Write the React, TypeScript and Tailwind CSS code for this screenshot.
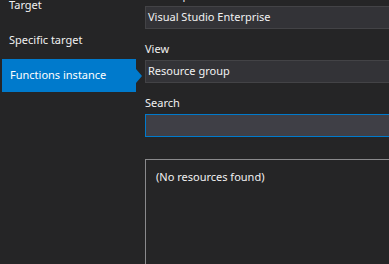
import React from "react";

const font = { fontFamily: '"Noto Sans", "Segoe UI", sans-serif' };

export default function App() {
  return (
    <div
      className="w-[389px] h-[264px] overflow-hidden bg-[#252526] text-[#f1f1f1] text-[11px] flex items-start"
      style={font}
    >
      {/* Sidebar */}
      <div className="w-[134px] shrink-0 ml-[2px] flex flex-col gap-[2px] mt-[-11px]">
        <div className="h-[33px] shrink-0 flex items-center pl-[7px]">Target</div>
        <div className="h-[33px] shrink-0 flex items-center pl-[7px]">Specific target</div>
        <div className="relative h-[33px] shrink-0 flex items-center pl-[8px] bg-[#007acc] text-white">
          Functions instance
          <div className="absolute right-[-6px] top-[10px] w-0 h-0 border-y-[7px] border-y-transparent border-l-[6px] border-l-[#007acc]" />
        </div>
      </div>

      {/* Main */}
      <div className="ml-[9px] w-[320px] min-w-[320px] shrink-0 flex flex-col">
        <div className="h-[16px] shrink-0 leading-[16px] mt-[-13px] mb-[3px]">Subscription</div>
        <div className="h-[23px] shrink-0 border border-[#434346] bg-[#333337] flex items-center pl-[2px]">
          Visual Studio Enterprise
        </div>
        <div className="h-[16px] shrink-0 leading-[16px] mt-[12px] mb-[3px]">View</div>
        <div className="h-[23px] shrink-0 border border-[#434346] bg-[#333337] flex items-center pl-[2px]">
          Resource group
        </div>
        <div className="h-[16px] shrink-0 leading-[16px] mt-[12px] mb-[3px]">Search</div>
        <div className="h-[23px] shrink-0 border border-[#007acc] bg-[#3f3f46]" />
        <div className="mt-[22px] h-[140px] shrink-0 border border-[#8a8a8c] pl-[10px] pt-[9px]">
          (No resources found)
        </div>
      </div>
    </div>
  );
}
